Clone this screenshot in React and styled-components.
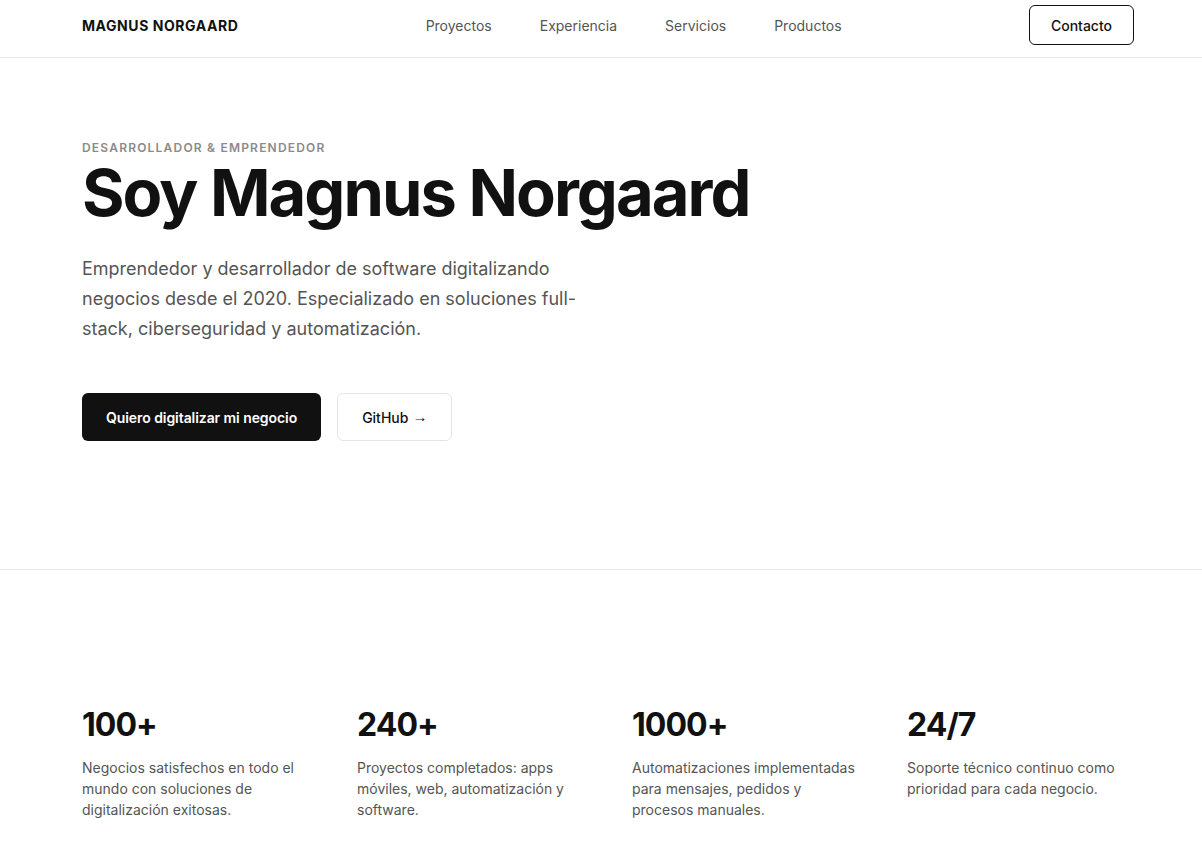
import styled, { createGlobalStyle } from 'styled-components';

const GlobalStyle = createGlobalStyle`
  * { box-sizing: border-box; }
  body {
    margin: 0;
    background: #fff;
    color: #111;
    font-family: Inter, "Noto Sans", sans-serif;
    -webkit-font-smoothing: antialiased;
  }
`;

const Inner = styled.div`
  padding: 0 68px 0 82px;
`;

const Header = styled.header`
  border-bottom: 1px solid #e8e8e8;
  padding-bottom: 7px;
`;

const NavBar = styled(Inner)`
  height: 50px;
  display: flex;
  align-items: center;
  justify-content: space-between;
`;

const Logo = styled.div`
  font-size: 14px;
  font-weight: 700;
  letter-spacing: 0.04em;
`;

const NavLinks = styled.nav`
  display: flex;
  gap: 48px;

  a {
    font-size: 14px;
    color: #555;
    text-decoration: none;
  }
`;

const OutlineButton = styled.a`
  display: inline-flex;
  align-items: center;
  justify-content: center;
  height: ${(p) => (p.$tall ? '48px' : '40px')};
  padding: 0 ${(p) => (p.$tall ? '24px' : '21px')};
  border: 1px solid ${(p) => (p.$soft ? '#e5e5e5' : '#111')};
  border-radius: 6px;
  font-size: 14px;
  font-weight: 500;
  color: #111;
  text-decoration: none;
  background: #fff;
`;

const Arrow = styled.span`
  font-family: "Liberation Sans", "DejaVu Sans", sans-serif;
  font-size: 15px;
  line-height: 1;
  margin-left: 4px;
  margin-bottom: 2px;
`;

const Hero = styled.section`
  border-bottom: 1px solid #e8e8e8;
`;

const HeroInner = styled(Inner)`
  padding-top: 82px;
  padding-bottom: 128px;
`;

const Eyebrow = styled.div`
  font-size: 12px;
  font-weight: 600;
  letter-spacing: 0.1em;
  color: #8a8a8a;
  line-height: 16px;
`;

const Title = styled.h1`
  margin: -1px 0 0;
  font-size: 65px;
  line-height: 76px;
  font-weight: 700;
  letter-spacing: -0.03em;
  color: #111;
`;

const Lead = styled.p`
  margin: 23px 0 0;
  max-width: 510px;
  font-size: 18px;
  line-height: 30px;
  color: #555;
`;

const Actions = styled.div`
  display: flex;
  gap: 16px;
  margin-top: 49px;
`;

const PrimaryButton = styled.a`
  display: inline-flex;
  align-items: center;
  height: 48px;
  padding: 0 24px;
  border-radius: 6px;
  background: #111;
  color: #fff;
  font-size: 14px;
  font-weight: 600;
  letter-spacing: -0.005em;
  text-decoration: none;
`;

const StatsInner = styled(Inner)`
  padding-top: 135px;
  padding-bottom: 40px;
  display: grid;
  grid-template-columns: repeat(4, 227px);
  gap: 48px;
`;

const Stat = styled.div`
  display: flex;
  flex-direction: column;
`;

const StatValue = styled.div`
  font-size: 32px;
  line-height: 40px;
  font-weight: 700;
  letter-spacing: -0.03em;
  color: #111;
`;

const StatText = styled.p`
  margin: 12px 0 0;
  font-size: 14px;
  line-height: 21px;
  color: #555;
`;

const stats = [
  ['100+', 'Negocios satisfechos en todo el mundo con soluciones de digitalización exitosas.'],
  ['240+', 'Proyectos completados: apps móviles, web, automatización y software.'],
  ['1000+', 'Automatizaciones implementadas para mensajes, pedidos y procesos manuales.'],
  ['24/7', 'Soporte técnico continuo como prioridad para cada negocio.'],
];

const App = () => {
  return (
    <>
      <GlobalStyle />
      <Header>
        <NavBar>
          <Logo>MAGNUS NORGAARD</Logo>
          <NavLinks>
            <a href="#proyectos">Proyectos</a>
            <a href="#experiencia">Experiencia</a>
            <a href="#servicios">Servicios</a>
            <a href="#productos">Productos</a>
          </NavLinks>
          <OutlineButton href="#contacto">Contacto</OutlineButton>
        </NavBar>
      </Header>
      <Hero>
        <HeroInner>
          <Eyebrow>DESARROLLADOR &amp; EMPRENDEDOR</Eyebrow>
          <Title>Soy Magnus Norgaard</Title>
          <Lead>
            Emprendedor y desarrollador de software digitalizando negocios desde
            el 2020. Especializado en soluciones full-stack, ciberseguridad y
            automatización.
          </Lead>
          <Actions>
            <PrimaryButton href="#contacto">Quiero digitalizar mi negocio</PrimaryButton>
            <OutlineButton href="#github" $tall $soft>
              GitHub<Arrow>→</Arrow>
            </OutlineButton>
          </Actions>
        </HeroInner>
      </Hero>
      <section>
        <StatsInner>
          {stats.map(([value, text]) => (
            <Stat key={value}>
              <StatValue>{value}</StatValue>
              <StatText>{text}</StatText>
            </Stat>
          ))}
        </StatsInner>
      </section>
    </>
  );
};

export default App;
